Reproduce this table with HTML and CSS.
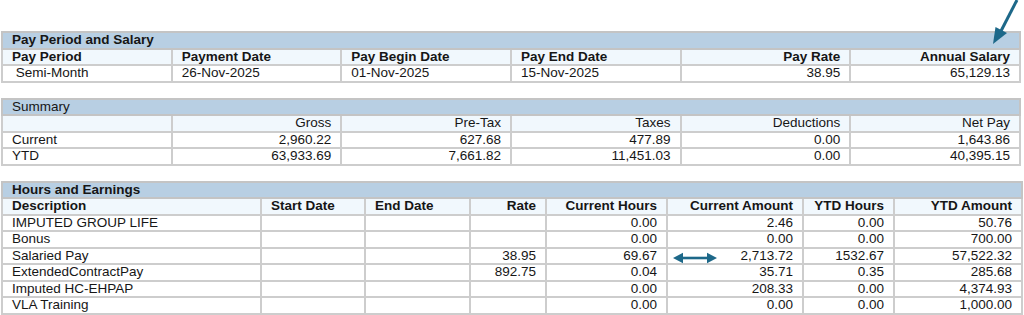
FILE: index.html
```html
<!DOCTYPE html>
<html>
<head>
<meta charset="utf-8">
<link rel="stylesheet" href="styles.css">
</head>
<body>
<div class="page">
  <table class="grid six">
    <colgroup><col><col><col><col><col><col></colgroup>
    <tr class="title"><td colspan="6">Pay Period and Salary</td></tr>
    <tr class="head">
      <td>Pay Period</td><td>Payment Date</td><td>Pay Begin Date</td><td>Pay End Date</td><td class="r">Pay Rate</td><td class="r">Annual Salary</td>
    </tr>
    <tr>
      <td>&nbsp;Semi-Month</td><td>26-Nov-2025</td><td>01-Nov-2025</td><td>15-Nov-2025</td><td class="r">38.95</td><td class="r">65,129.13</td>
    </tr>
  </table>

  <table class="grid six">
    <colgroup><col><col><col><col><col><col></colgroup>
    <tr class="title light"><td colspan="6">Summary</td></tr>
    <tr class="head light">
      <td></td><td class="r">Gross</td><td class="r">Pre-Tax</td><td class="r">Taxes</td><td class="r">Deductions</td><td class="r">Net Pay</td>
    </tr>
    <tr><td>Current</td><td class="r">2,960.22</td><td class="r">627.68</td><td class="r">477.89</td><td class="r">0.00</td><td class="r">1,643.86</td></tr>
    <tr><td>YTD</td><td class="r">63,933.69</td><td class="r">7,661.82</td><td class="r">11,451.03</td><td class="r">0.00</td><td class="r">40,395.15</td></tr>
  </table>

  <table class="grid hours">
    <colgroup>
      <col class="c1"><col class="c2"><col class="c3"><col class="c4"><col class="c5"><col class="c6"><col class="c7"><col class="c8">
    </colgroup>
    <tr class="title"><td colspan="8">Hours and Earnings</td></tr>
    <tr class="head">
      <td>Description</td><td>Start Date</td><td>End Date</td><td class="r">Rate</td><td class="r">Current Hours</td><td class="r">Current Amount</td><td class="r">YTD Hours</td><td class="r">YTD Amount</td>
    </tr>
    <tr><td>IMPUTED GROUP LIFE</td><td></td><td></td><td></td><td class="r">0.00</td><td class="r">2.46</td><td class="r">0.00</td><td class="r">50.76</td></tr>
    <tr><td>Bonus</td><td></td><td></td><td></td><td class="r">0.00</td><td class="r">0.00</td><td class="r">0.00</td><td class="r">700.00</td></tr>
    <tr><td>Salaried Pay</td><td></td><td></td><td class="r">38.95</td><td class="r">69.67</td><td class="r amt">
      <svg class="dbl" width="44" height="12" viewBox="0 0 44 12"><path d="M9 6H35" stroke="#1d6889" stroke-width="2.6"/><path d="M0 6L10 0.8V11.2Z M44 6L34 0.8V11.2Z" fill="#1d6889"/></svg>2,713.72</td><td class="r">1532.67</td><td class="r">57,522.32</td></tr>
    <tr><td>ExtendedContractPay</td><td></td><td></td><td class="r">892.75</td><td class="r">0.04</td><td class="r">35.71</td><td class="r">0.35</td><td class="r">285.68</td></tr>
    <tr><td>Imputed HC-EHPAP</td><td></td><td></td><td></td><td class="r">0.00</td><td class="r">208.33</td><td class="r">0.00</td><td class="r">4,374.93</td></tr>
    <tr><td>VLA Training</td><td></td><td></td><td></td><td class="r">0.00</td><td class="r">0.00</td><td class="r">0.00</td><td class="r">1,000.00</td></tr>
  </table>

  <svg class="pointer" width="40" height="48" viewBox="0 0 40 48">
    <path d="M34 0L18 31" stroke="#1d6889" stroke-width="3"/>
    <path d="M10 44L12.5 27L24 33Z" fill="#1d6889"/>
  </svg>
</div>
</body>
</html>
```

FILE: styles.css
```css
html, body {
  margin: 0;
  padding: 0;
  background: #ffffff;
}
.page {
  position: relative;
  width: 1024px;
  height: 315px;
  overflow: hidden;
  padding: 31px 0 0 1px;
  box-sizing: border-box;
  font-family: "Liberation Sans", Arial, sans-serif;
  font-size: 13.5px;
  color: #161616;
}
.grid {
  width: 1020px;
  border-collapse: collapse;
  table-layout: fixed;
  border: 2px solid #c4c4c4;
  margin-bottom: 15px;
}
.grid td {
  border: 2px solid #cdcdcd;
  padding: 0 9px 0 9px;
  height: 14.5px;
  line-height: 14.5px;
  white-space: nowrap;
  overflow: visible;
}
.grid .title td {
  background: #b8cfe3;
  font-weight: bold;
  padding-left: 9px;
  border-color: #c4c4c4;
}
.grid .title.light td {
  font-weight: normal;
}
.grid .head td {
  background: #f1f8fd;
  font-weight: bold;
}
.grid .head.light td {
  font-weight: normal;
}
.grid td.r {
  text-align: right;
}
.hours .c1 { width: 259px; }
.hours .c2 { width: 104px; }
.hours .c3 { width: 105px; }
.hours .c4 { width: 76px; }
.hours .c5 { width: 121px; }
.hours .c6 { width: 136px; }
.hours .c7 { width: 91px; }
.hours .c8 { width: 128px; }
.amt {
  position: relative;
}
.dbl {
  position: absolute;
  left: 5px;
  top: 3px;
}
.pointer {
  position: absolute;
  right: 1px;
  top: 0;
}
```
